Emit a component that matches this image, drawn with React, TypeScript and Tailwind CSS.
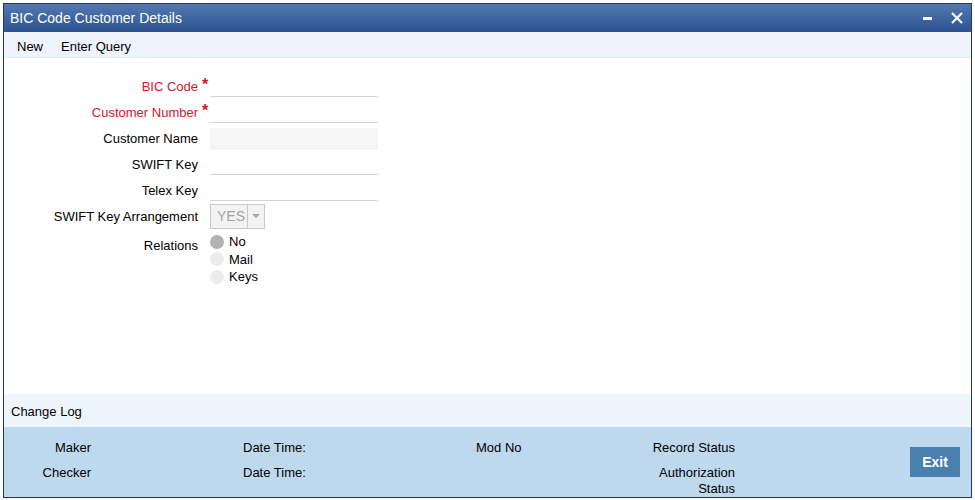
import React from "react";

const Row = ({ label, required, children }: { label: string; required?: boolean; children?: React.ReactNode }) => (
  <div className="flex items-center h-[26px]">
    <div className={`relative w-[194px] text-right pt-[1px] ${required ? "text-[#d2162c]" : "text-black"}`}>
      {label}
      {required && <span className="absolute left-[198px] top-[-3px] text-[#d2162c] text-[16px] font-bold">*</span>}
    </div>
    <div className="ml-[12px]">{children}</div>
  </div>
);

const Input = ({ disabled }: { disabled?: boolean }) => (
  <div className={`w-[168px] h-[21px] border-b ${disabled ? "bg-[#f6f6f6] border-[#ececec]" : "bg-white border-[#d4d4d4]"}`} />
);

const Radio = ({ label, checked }: { label: string; checked?: boolean }) => (
  <div className="flex items-center h-[17.5px]">
    <span className={`w-[14px] h-[14px] rounded-full ${checked ? "bg-[#b2b2b2]" : "bg-[#ececec]"}`} />
    <span className="ml-[5px]">{label}</span>
  </div>
);

export default function App() {
  return (
    <div className="w-[975px] h-[500px] bg-white pt-[3px] pl-[3px] pr-[3px] pb-[2px] font-['Liberation_Sans',Arial,sans-serif] text-[13px] text-black">
      <div className="h-full border border-[#1e3a64] flex flex-col">
        {/* title bar */}
        <div className="h-[28px] bg-gradient-to-b from-[#5479b0] to-[#2b5390] flex items-center justify-between pl-[6px] pr-[8px] text-white">
          <span className="text-[14px]">BIC Code Customer Details</span>
          <div className="flex items-center gap-[18px]">
            <svg width="10" height="10" viewBox="0 0 10 10">
              <rect x="0" y="4" width="9" height="3" fill="white" />
            </svg>
            <svg width="12" height="12" viewBox="0 0 12 12">
              <path d="M1 1 L11 11 M11 1 L1 11" stroke="white" strokeWidth="2.2" />
            </svg>
          </div>
        </div>
        {/* menu bar */}
        <div className="h-[26px] bg-[#eef4fc] border-b border-[#e2e9f1] flex items-center pl-[13px] gap-[18px] pt-[4px]">
          <span>New</span>
          <span>Enter Query</span>
        </div>
        {/* form */}
        <div className="flex-1 pt-[15px] pl-[0px]">
          <Row label="BIC Code" required>
            <Input />
          </Row>
          <Row label="Customer Number" required>
            <Input />
          </Row>
          <Row label="Customer Name">
            <Input disabled />
          </Row>
          <Row label="SWIFT Key">
            <Input />
          </Row>
          <Row label="Telex Key">
            <Input />
          </Row>
          <Row label="SWIFT Key Arrangement">
            <div className="flex h-[25px] w-[55px] border border-[#c9c9c9] bg-[#f3f3f3] mt-[1px]">
              <span className="flex-1 flex items-center pl-[6px] text-[#a3a3a3] text-[14px]">YES</span>
              <span className="w-[17px] border-l border-[#c9c9c9] flex items-center justify-center">
                <svg width="8" height="5" viewBox="0 0 8 5">
                  <path d="M0 0 L8 0 L4 4 Z" fill="#a8a8a8" />
                </svg>
              </span>
            </div>
          </Row>
          <div className="flex mt-[4px]">
            <div className="w-[194px] text-right pt-[3px]">Relations</div>
            <div className="ml-[12px] flex flex-col">
              <Radio label="No" checked />
              <Radio label="Mail" />
              <Radio label="Keys" />
            </div>
          </div>
        </div>
        {/* change log */}
        <div className="h-[33px] bg-[#eef5fd] flex items-center pl-[7px] pt-[2px]">Change Log</div>
        {/* footer */}
        <div className="h-[70px] bg-[#bed9ed] flex pt-[12px]">
          <div className="w-[87px] text-right flex flex-col gap-[7px]">
            <span className="leading-[18px]">Maker</span>
            <span className="leading-[18px]">Checker</span>
          </div>
          <div className="ml-[152px] w-[233px] flex flex-col gap-[7px]">
            <span className="leading-[18px]">Date Time:</span>
            <span className="leading-[18px]">Date Time:</span>
          </div>
          <div className="w-[100px] leading-[18px]">Mod No</div>
          <div className="w-[159px] text-right flex flex-col">
            <span className="leading-[18px]">Record Status</span>
            <span className="leading-[16px] mt-[8px]">Authorization<br />Status</span>
          </div>
          <div className="flex-1 flex justify-end pr-[11px] pt-[8px]">
            <button className="w-[50px] h-[30px] bg-[#4a80ae] text-white font-bold text-[14px]">Exit</button>
          </div>
        </div>
      </div>
    </div>
  );
}
